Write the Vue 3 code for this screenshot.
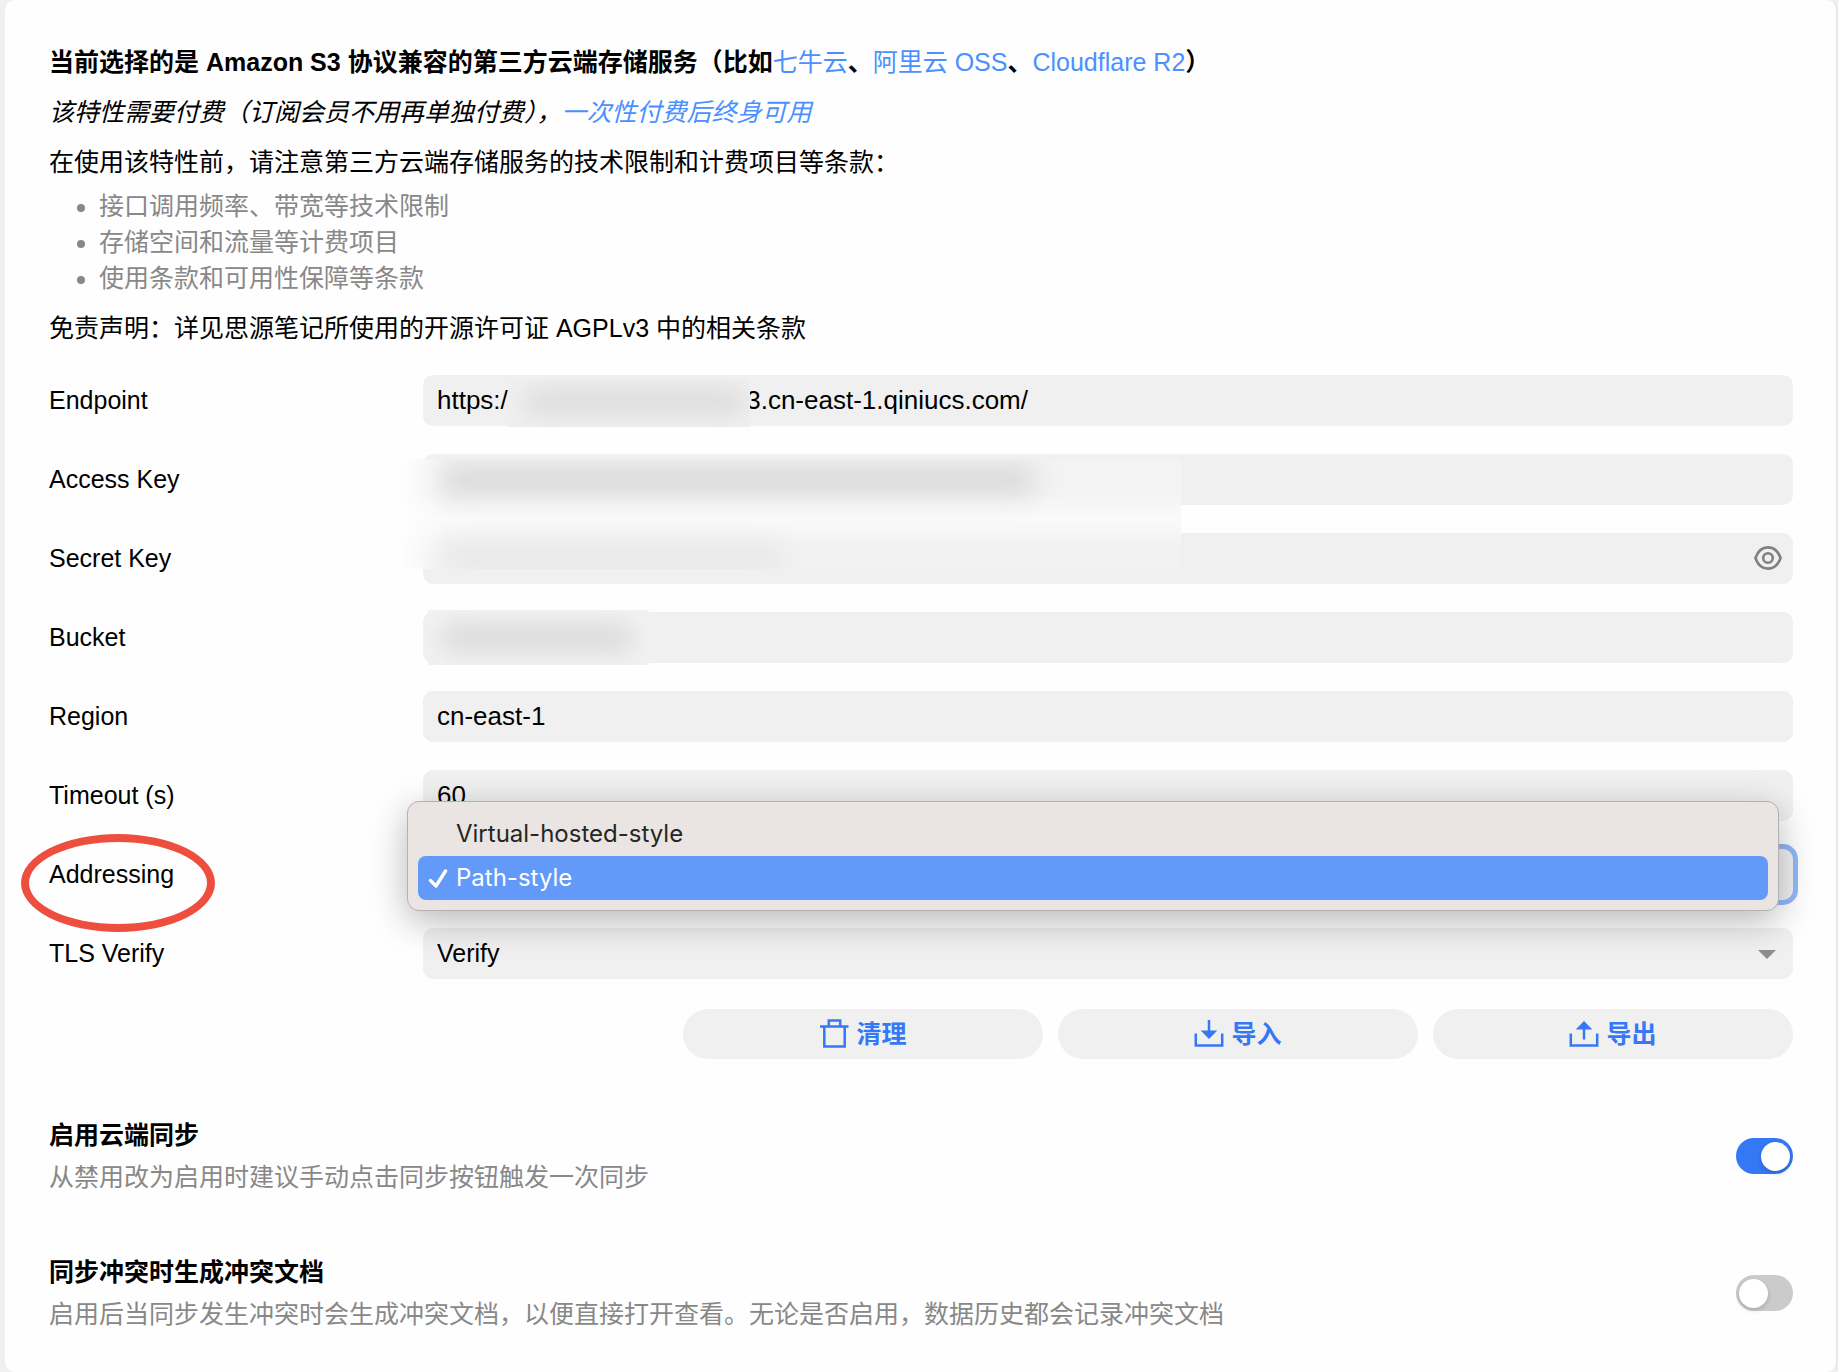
<script setup>
import { reactive, ref } from 'vue'

const features = ['接口调用频率、带宽等技术限制', '存储空间和流量等计费项目', '使用条款和可用性保障等条款']

const form = reactive({
  endpoint: 'https:/' + ' '.repeat(33) + '3.cn-east-1.qiniucs.com/',
  accessKey: '',
  secretKey: '',
  bucket: '',
  region: 'cn-east-1',
  timeout: '60',
  addressing: 'Path-style',
  tls: 'Verify',
})

const addressingOptions = ['Virtual-hosted-style', 'Path-style']

const syncEnabled = ref(true)
const conflictDoc = ref(false)
</script>

<template>
  <main class="panel">
    <section class="intro">
      <p class="strong">
        当前选择的是 Amazon S3 协议兼容的第三方云端存储服务（比如<a href="#qiniu">七牛云</a>、<a href="#aliyun">阿里云 OSS</a>、<a href="#r2">Cloudflare R2</a>）
      </p>
      <p><em>该特性需要付费（订阅会员不用再单独付费），<a href="#pay">一次性付费后终身可用</a></em></p>
      <p>在使用该特性前，请注意第三方云端存储服务的技术限制和计费项目等条款：</p>
      <ul>
        <li v-for="item in features" :key="item">{{ item }}</li>
      </ul>
      <p>免责声明：详见思源笔记所使用的开源许可证 AGPLv3 中的相关条款</p>
    </section>

    <form class="fields" @submit.prevent>
      <div class="row">
        <label for="endpoint">Endpoint</label>
        <div class="control">
          <input id="endpoint" v-model="form.endpoint" type="text" />
          <div class="mask mask-endpoint"><i class="smear"></i></div>
        </div>
      </div>
      <div class="row">
        <label for="access">Access Key</label>
        <div class="control">
          <input id="access" v-model="form.accessKey" type="text" />
          <div class="mask mask-keys"><i class="smear smear-access"></i><i class="smear smear-secret"></i></div>
        </div>
      </div>
      <div class="row">
        <label for="secret">Secret Key</label>
        <div class="control">
          <input id="secret" v-model="form.secretKey" type="password" />
          <button class="reveal" type="button" aria-label="Show">
            <svg viewBox="0 0 28 24" width="28" height="24" fill="none" stroke="#808080">
              <path d="M1.4 12C3.6 5.8 8.2 1.4 14 1.4S24.4 5.8 26.6 12C24.4 18.2 19.8 22.6 14 22.6S3.6 18.2 1.4 12Z" stroke-width="2.6" stroke-linejoin="round" />
              <circle cx="14" cy="12" r="4.8" stroke-width="2.6" />
            </svg>
          </button>
        </div>
      </div>
      <div class="row">
        <label for="bucket">Bucket</label>
        <div class="control">
          <input id="bucket" v-model="form.bucket" type="text" />
          <div class="mask mask-bucket"><i class="smear"></i></div>
        </div>
      </div>
      <div class="row">
        <label for="region">Region</label>
        <div class="control"><input id="region" v-model="form.region" type="text" /></div>
      </div>
      <div class="row">
        <label for="timeout">Timeout (s)</label>
        <div class="control"><input id="timeout" v-model="form.timeout" type="text" inputmode="numeric" /></div>
      </div>
      <div class="row">
        <label for="addressing" class="circled">Addressing</label>
        <div class="control">
          <select id="addressing" v-model="form.addressing" class="open">
            <option v-for="o in addressingOptions" :key="o">{{ o }}</option>
          </select>
          <div class="menu" role="listbox" aria-label="Addressing">
            <div
              v-for="o in addressingOptions"
              :key="o"
              class="option"
              :class="{ selected: o === form.addressing }"
              role="option"
              :aria-selected="o === form.addressing"
              @click="form.addressing = o"
            >
              <svg class="check" viewBox="0 0 20 20" width="20" height="20" fill="none" stroke="currentColor" stroke-width="3.4" stroke-linecap="round" stroke-linejoin="round">
                <path v-if="o === form.addressing" d="M2.500 12.500L8 18L17.500 3" />
              </svg>
              <span>{{ o }}</span>
            </div>
          </div>
        </div>
      </div>
      <div class="row">
        <label for="tls">TLS Verify</label>
        <div class="control">
          <select id="tls" v-model="form.tls">
            <option>Verify</option>
            <option>Skip</option>
          </select>
          <svg class="caret" viewBox="0 0 18 9" width="18" height="9"><path d="M0 0h18L9 9z" fill="#8e8e90" /></svg>
        </div>
      </div>
      <div class="actions">
        <button type="button">
          <svg viewBox="0 0 30 30" width="30" height="30" fill="none" stroke="currentColor" stroke-width="2.5">
            <path d="M1 7.500H29.500M9.800 7V1.500H21.200V7M5.300 8V27.500H25.700V8" />
          </svg>
          清理
        </button>
        <button type="button">
          <svg viewBox="0 0 30 30" width="30" height="30" fill="none" stroke="currentColor" stroke-width="2.5">
            <path d="M1.800 14.500V26.500H28.200V14.500M15 1V13" />
            <path d="M6.700 11.500H23.300L15 20Z" fill="currentColor" stroke="none" />
          </svg>
          导入
        </button>
        <button type="button">
          <svg viewBox="0 0 30 30" width="30" height="30" fill="none" stroke="currentColor" stroke-width="2.5">
            <path d="M1.800 14.500V26.500H28.200V14.500M15 9V20.500" />
            <path d="M6.700 10.500H23.300L15 2Z" fill="currentColor" stroke="none" />
          </svg>
          导出
        </button>
      </div>
    </form>

    <label class="setting">
      <span class="text">
        <strong>启用云端同步</strong>
        <span class="desc">从禁用改为启用时建议手动点击同步按钮触发一次同步</span>
      </span>
      <input v-model="syncEnabled" class="switch" type="checkbox" />
    </label>
    <label class="setting">
      <span class="text">
        <strong>同步冲突时生成冲突文档</strong>
        <span class="desc">启用后当同步发生冲突时会生成冲突文档，以便直接打开查看。无论是否启用，数据历史都会记录冲突文档</span>
      </span>
      <input v-model="conflictDoc" class="switch" type="checkbox" />
    </label>
  </main>
</template>

<style>
body {
  background: #f0f0f0;
}
</style>

<style scoped>
.panel {
  box-sizing: border-box;
  min-height: 100vh;
  margin-left: 5px;
  padding: 37px 43px 32px 44px;
  border-right: 2px solid #e8e8e8;
  border-radius: 10px;
  background: #fefefe;
  color: #000;
  font: 25px/50px "Liberation Sans", "Noto Sans CJK SC", sans-serif;
}
p {
  margin: 0;
}
.strong {
  font-weight: 700;
}
a {
  color: #4a90ff;
  font-weight: 400;
  text-decoration: none;
}
ul {
  margin: 1px 0 7px;
  padding-left: 50px;
  color: #888;
  line-height: 36px;
}
.fields {
  display: flex;
  flex-direction: column;
  gap: 28px;
  margin-top: 22px;
}
.row {
  display: flex;
  line-height: 51px;
}
.row > label {
  width: 374px;
  flex: none;
  position: relative;
}
.control {
  flex: 1;
  position: relative;
  display: flex;
}
.control input,
.control select {
  appearance: none;
  box-sizing: border-box;
  width: 100%;
  height: 51px;
  margin: 0;
  padding: 0 14px;
  border: 0;
  border-radius: 10px;
  outline: none;
  background: #f0f0f0;
  color: #000;
  font: inherit;
}
.control input {
  font-size: 26px;
}
.control select.open {
  box-shadow: 0 0 0 5px #92b8f9;
}
.mask {
  position: absolute;
  z-index: 1;
  overflow: hidden;
  background: #f2f2f2;
}
.smear {
  position: absolute;
  border-radius: 14px;
  background: #dadada;
  filter: blur(12px);
}
.mask-endpoint {
  left: 85px;
  top: 4px;
  width: 242px;
  height: 48px;
  background: #f0f0f0;
}
.mask-endpoint .smear {
  inset: 11px 4px 13px 16px;
}
.mask-keys {
  left: -23px;
  top: 5px;
  width: 781px;
  height: 110px;
  background:
    linear-gradient(to right, #fefefe, #fefefe00 48px),
    linear-gradient(#f3f3f3 30%, #fafafa 54%, #f2f2f2 80%);
}
.smear-access {
  left: 40px;
  top: 6px;
  width: 596px;
  height: 30px;
}
.smear-secret {
  left: 44px;
  top: 86px;
  width: 340px;
  height: 26px;
  background: #e7e7e7;
}
.mask-bucket {
  left: 5px;
  top: -2px;
  width: 221px;
  height: 55px;
}
.mask-bucket .smear {
  inset: 14px 14px 13px 12px;
}
.reveal {
  position: absolute;
  right: 11px;
  top: 13px;
  display: flex;
  padding: 0;
  border: 0;
  background: none;
}
.caret {
  position: absolute;
  right: 17px;
  top: 22px;
  pointer-events: none;
}
.circled::after {
  content: "";
  position: absolute;
  box-sizing: border-box;
  left: -28px;
  top: -15px;
  width: 194px;
  height: 98px;
  border: 8px solid #ed4e3d;
  border-radius: 50%;
}
.menu {
  position: absolute;
  z-index: 2;
  left: -16px;
  right: 14px;
  top: -48px;
  padding: 10px;
  border: 1px solid #b4b2b1;
  border-radius: 12px;
  background: #eae5e2;
  box-shadow: 0 10px 36px #00000048;
  color: #262626;
  font: 24px/44px Inter, sans-serif;
}
.option {
  display: flex;
  align-items: center;
  gap: 8px;
  height: 44px;
  padding-left: 10px;
  border-radius: 8px;
}
.option.selected {
  background: #6399f8;
  color: #fff;
}
.actions {
  display: flex;
  justify-content: flex-end;
  gap: 15px;
  margin-top: 2px;
}
.actions button {
  display: flex;
  align-items: center;
  justify-content: center;
  gap: 7px;
  width: 360px;
  height: 50px;
  padding: 0;
  border: 0;
  border-radius: 25px;
  background: #f0f0f0;
  color: #3478f6;
  font: inherit;
  font-weight: 700;
}
.setting {
  display: flex;
  align-items: center;
  justify-content: space-between;
  height: 84px;
  margin-top: 53px;
  line-height: 42px;
}
.fields + .setting {
  margin-top: 55px;
}
.text {
  display: flex;
  flex-direction: column;
}
.desc {
  color: #888;
}
.switch {
  appearance: none;
  flex: none;
  position: relative;
  width: 57px;
  height: 36px;
  margin: 0;
  border-radius: 18px;
  background: #cbcbcb;
}
.switch::before {
  content: "";
  position: absolute;
  left: 3px;
  top: 4px;
  width: 29px;
  height: 29px;
  border-radius: 50%;
  background: #fff;
  box-shadow: 0 2px 5px #0000002e;
}
.switch:checked {
  background: #3478f6;
}
.switch:checked::before {
  left: 25px;
}
</style>
